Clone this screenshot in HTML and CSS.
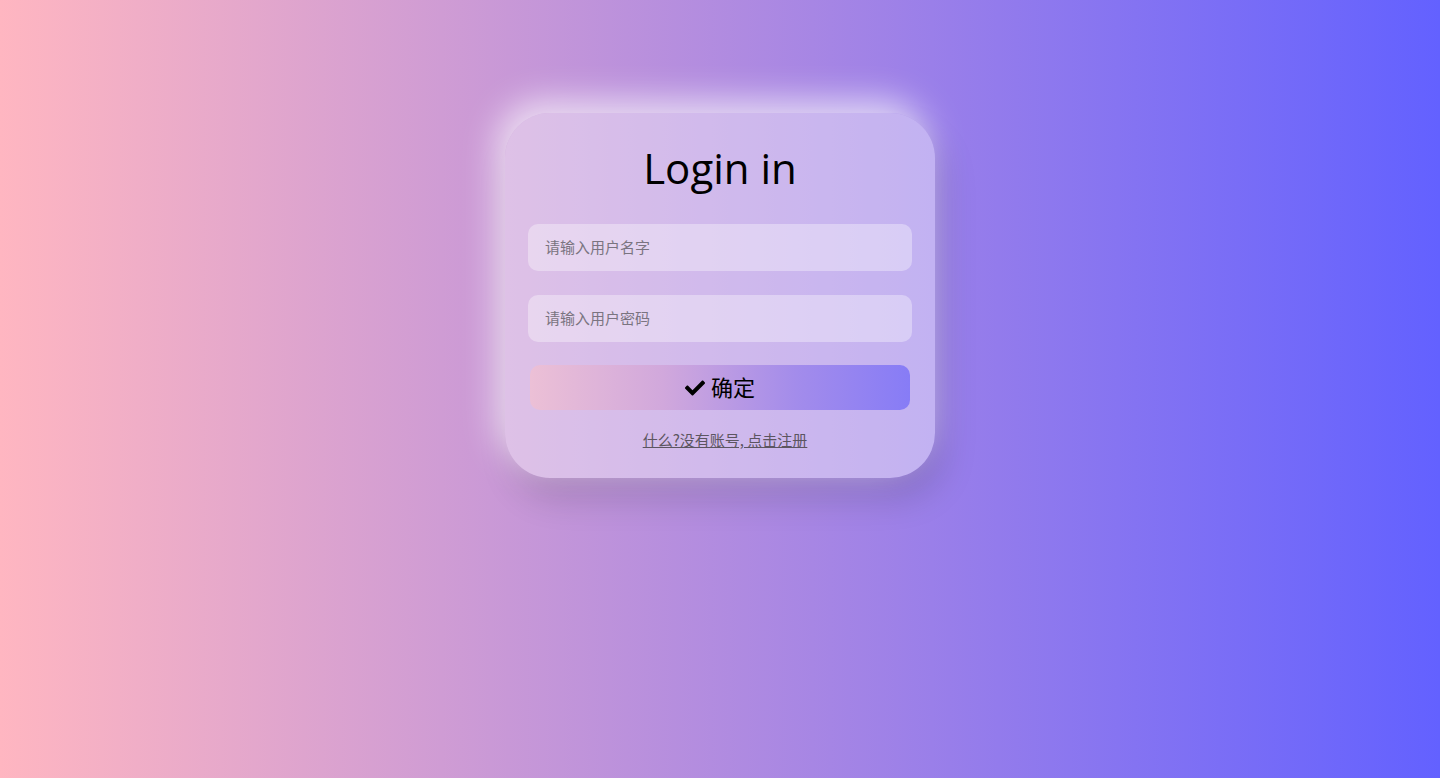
FILE: index.html
```html
<!DOCTYPE html>
<html lang="zh">
<head>
<meta charset="utf-8">
<title>Login in</title>
<link rel="stylesheet" href="styles.css">
</head>
<body>
<main class="page">
  <form class="card">
    <h1 class="title">Login in</h1>
    <input class="field" type="text" placeholder="请输入用户名字">
    <input class="field" type="password" placeholder="请输入用户密码">
    <button class="submit" type="button">
      <svg class="check" viewBox="0 0 512 512" aria-hidden="true"><path d="M173.9 439.4l-166.4-166.4c-10-10-10-26.2 0-36.2l36.2-36.2c10-10 26.2-10 36.2 0L192 312.7 432.1 72.6c10-10 26.2-10 36.2 0l36.2 36.2c10 10 10 26.2 0 36.2L210.1 439.4c-10 10-26.2 10-36.2 0z"/></svg>
      <span class="label">确定</span>
    </button>
    <a class="register" href="#">什么?没有账号, 点击注册</a>
  </form>
</main>
</body>
</html>
```

FILE: styles.css
```css
html, body {
  margin: 0;
  height: 100%;
}

body {
  background: linear-gradient(to right, #ffb6c1, #6361ff);
  font-family: "Noto Sans", "Noto Sans CJK SC", sans-serif;
}

.page {
  display: flex;
  justify-content: center;
  padding-top: 113px;
}

.card {
  width: 430px;
  height: 365px;
  box-sizing: border-box;
  padding: 27px 23px 0;
  border-radius: 45px;
  background: rgba(255, 255, 255, 0.4);
  box-shadow: -8px -12px 35px rgba(255, 255, 255, 0.7),
              8px 20px 35px rgba(0, 0, 0, 0.15);
  display: flex;
  flex-direction: column;
  align-items: center;
}

.title {
  margin: 0 0 28px;
  font-family: "Open Sans", "Noto Sans", sans-serif;
  font-weight: 400;
  font-size: 42px;
  line-height: 56px;
  color: #000;
}

.field {
  width: 100%;
  height: 47px;
  box-sizing: border-box;
  margin: 0 0 24px;
  padding: 0 17px 2px;
  border: none;
  outline: none;
  border-radius: 10px;
  background: rgba(255, 255, 255, 0.35);
  font-family: "Noto Sans CJK SC", sans-serif;
  font-size: 15px;
  color: #333;
}

.field + .field {
  margin-bottom: 23px;
}

.field::placeholder {
  color: #7a7480;
}

.submit {
  width: 380px;
  height: 45px;
  padding: 0 0 3px;
  border: none;
  border-radius: 10px;
  background: linear-gradient(to right, #ecc0d6, #d1a8dc 35%, #a38ceb 70%, #877cf6);
  display: flex;
  align-items: center;
  justify-content: center;
  gap: 6px;
  font-family: "Noto Sans CJK SC", sans-serif;
  font-size: 22px;
  color: #000;
  cursor: pointer;
}

.check {
  width: 20px;
  height: 20px;
  margin-top: 3px;
  fill: #000;
}

.register {
  margin-top: 19px;
  margin-left: 10px;
  font-family: "Noto Sans CJK SC", sans-serif;
  font-size: 15px;
  color: #5c5560;
  text-decoration: underline;
}
```
